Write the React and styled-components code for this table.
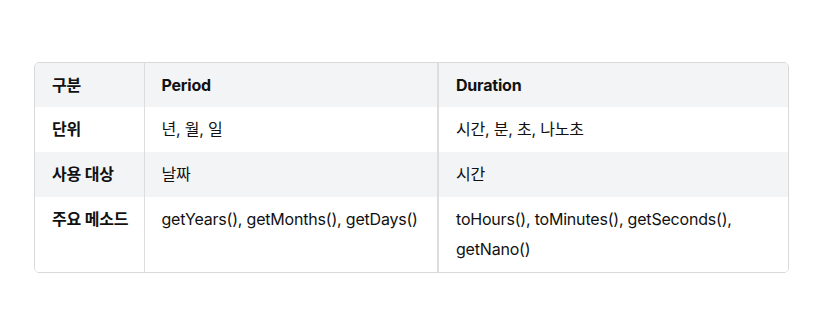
import styled, { createGlobalStyle } from 'styled-components';

const GlobalStyle = createGlobalStyle`
    body {
        margin: 0;
        background: #ffffff;
        font-family: "Inter", "Noto Sans CJK KR", sans-serif;
        color: #111111;
    }
`;

const Page = styled.div`
    padding: 62px 38px 0 34px;
`;

const TableWrap = styled.div`
    width: 753px;
    border: 1px solid #d9d9d9;
    border-radius: 5px;
    overflow: hidden;
`;

const Table = styled.table`
    width: 100%;
    border-collapse: collapse;
    table-layout: fixed;
    font-size: 16px;
    line-height: 30px;
`;

const Row = styled.tr`
    background: ${p => (p.$shaded ? '#f3f4f6' : '#ffffff')};
`;

const Cell = styled.td`
    padding: 7px 4px ${p => (p.as === 'th' ? '7px' : '8px')} 17px;
    vertical-align: top;
    text-align: left;
    font-weight: ${p => (p.$bold ? 700 : 400)};
    white-space: ${p => (p.$first ? 'nowrap' : 'normal')};
    border-left: ${p => (p.$first ? 'none' : p.$wide ? '2px solid #dddddd' : '1px solid #dddddd')};
    letter-spacing: -0.2px;
`;

const rows = [
    ['단위', '년, 월, 일', '시간, 분, 초, 나노초'],
    ['사용 대상', '날짜', '시간'],
    ['주요 메소드', 'getYears(), getMonths(), getDays()', 'toHours(), toMinutes(), getSeconds(), getNano()'],
];

const App = () => {
    return (
        <>
            <GlobalStyle />
            <Page>
                <TableWrap>
                    <Table>
                        <colgroup>
                            <col style={{ width: 109 }} />
                            <col style={{ width: 294 }} />
                            <col />
                        </colgroup>
                        <thead>
                            <Row $shaded>
                                <Cell as="th" $bold $first>구분</Cell>
                                <Cell as="th" $bold>Period</Cell>
                                <Cell as="th" $bold $wide>Duration</Cell>
                            </Row>
                        </thead>
                        <tbody>
                            {rows.map((r, i) => (
                                <Row key={r[0]} $shaded={i % 2 === 1}>
                                    <Cell $bold $first>{r[0]}</Cell>
                                    <Cell>{r[1]}</Cell>
                                    <Cell $wide>{r[2]}</Cell>
                                </Row>
                            ))}
                        </tbody>
                    </Table>
                </TableWrap>
            </Page>
        </>
    );
};

export default App;
